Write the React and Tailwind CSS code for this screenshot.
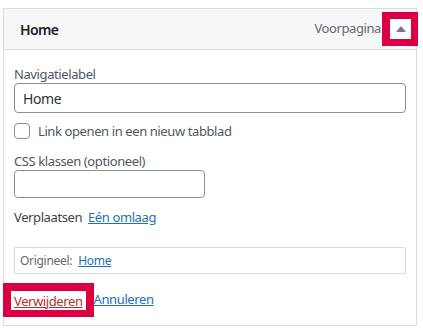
import React from 'react';

const font = { fontFamily: '"Noto Sans", "Open Sans", sans-serif' };

function App() {
  return (
    <div className="w-[423px] h-[331px] bg-white pt-[8px] pl-[3px] tracking-[-0.4px]" style={font}>
      <div className="w-[414px] border border-[#dcdcde] bg-white">
        {/* Header */}
        <div className="h-[41px] flex items-center bg-[#f6f7f7] border-b border-[#dcdcde] pl-[16px]">
          <span className="text-[14px] font-semibold text-[#1d2327] tracking-[-0.6px]">Home</span>
          <span className="ml-auto text-[13px] text-[#646970]">Voorpagina</span>
          <div className="-mr-[2px] ml-[1px] w-[36px] h-[34px] border-[7px] border-l-[8px] border-[#dc0043] bg-white flex items-center justify-center">
            <svg width="10" height="6" viewBox="0 0 10 6">
              <path d="M5 0 L10 6 L0 6 Z" fill="#787c82" />
            </svg>
          </div>
        </div>

        {/* Body */}
        <div className="px-[10px] pt-[16px] pb-[8px] text-[13px] text-[#50575e]">
          <label className="block leading-[17px]">Navigatielabel</label>
          <div className="h-[30px] border border-[#8c8f94] rounded-[4px] flex items-center px-[8px] text-[14px] text-[#2c3338]">
            Home
          </div>

          <div className="mt-[10px] flex items-center gap-[8px]">
            <span className="w-[16px] h-[16px] border border-[#8c8f94] rounded-[4px] bg-white" />
            <span className="leading-[16px]">Link openen in een nieuw tabblad</span>
          </div>

          <label className="block mt-[14px] leading-[17px]">CSS klassen (optioneel)</label>
          <div className="w-[191px] h-[28px] border border-[#8c8f94] rounded-[4px]" />

          <div className="mt-[10px] leading-[18px] text-[#3c434a]">
            Verplaatsen{' '}
            <a className="ml-[3px] text-[#2271b1] underline">Eén omlaag</a>
          </div>

          <div className="mt-[21px] h-[27px] border border-[#dcdcde] flex items-center px-[5px] text-[12px] text-[#646970] tracking-[-0.3px]">
            Origineel:
            <a className="ml-[6px] text-[#2271b1] underline">Home</a>
          </div>

          <div className="mt-[9px] flex items-center">
            <div className="-ml-[11px] h-[34px] border-[8px] border-b-[7px] border-r-[8px] border-[#dc0043] bg-white pl-[3px] pr-[3px] flex items-center">
              <a className="text-[#b32d2e] underline leading-[18px]">Verwijderen</a>
            </div>
            <a className="text-[#2271b1] underline">Annuleren</a>
          </div>
        </div>
      </div>
    </div>
  );
}

export default App;
